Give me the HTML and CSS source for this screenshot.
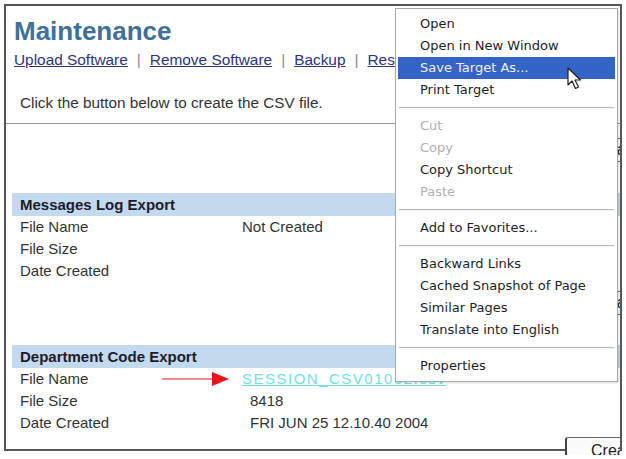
FILE: index.html
```html
<!DOCTYPE html>
<html lang="en">
<head>
  <meta charset="UTF-8" />
  <title>Maintenance</title>
  <link rel="stylesheet" href="styles.css">
</head>
<body>
  <div class="frame">
    <div class="page">
      <h1 class="title">Maintenance</h1>
      <div class="tabs">
        <a href="#">Upload Software</a><span class="pipe">|</span><a href="#">Remove Software</a><span class="pipe">|</span><a href="#">Backup</a><span class="pipe">|</span><a href="#">Restore</a><span class="pipe">|</span><a href="#">Export</a>
      </div>
      <p class="intro">Click the button below to create the CSV file.</p>
      <div class="rule"></div>
      <div class="btn-row first"><button class="btn">Create CSV</button></div>

      <div class="band">Messages Log Export</div>
      <div class="row"><span class="label">File Name</span><span class="value">Not Created</span></div>
      <div class="row"><span class="label">File Size</span><span class="value"></span></div>
      <div class="row"><span class="label">Date Created</span><span class="value"></span></div>
      <div class="btn-row second"><button class="btn">Create CSV</button></div>

      <div class="band dept">Department Code Export</div>
      <div class="row">
        <span class="label">File Name
          <svg class="arrow" width="68" height="14" viewBox="0 0 68 14">
            <line x1="0" y1="7" x2="52" y2="7" stroke="#e21b1b" stroke-width="1.2"/>
            <polygon points="50,0 67,7 50,14" fill="#e8141a"/>
          </svg>
        </span>
        <a class="value file-link" href="#">SESSION_CSV01062.csv</a>
      </div>
      <div class="row"><span class="label">File Size</span><span class="value num">8418</span></div>
      <div class="row"><span class="label">Date Created</span><span class="value num">FRI JUN 25 12.10.40 2004</span></div>
      <div class="btn-row last"><button class="btn">Create CSV</button></div>
    </div>

    <ul class="context-menu">
      <li>Open</li>
      <li>Open in New Window</li>
      <li class="active">Save Target As...</li>
      <li>Print Target</li>
      <li class="sep"></li>
      <li class="off">Cut</li>
      <li class="off">Copy</li>
      <li>Copy Shortcut</li>
      <li class="off">Paste</li>
      <li class="sep"></li>
      <li>Add to Favorites...</li>
      <li class="sep"></li>
      <li>Backward Links</li>
      <li>Cached Snapshot of Page</li>
      <li>Similar Pages</li>
      <li>Translate into English</li>
      <li class="sep"></li>
      <li>Properties</li>
    </ul>

    <svg class="cursor" width="16" height="24" viewBox="0 0 16 24">
      <path d="M1 1 L1 18 L5 14 L8.5 21.5 L11.5 20 L8 13 L13.5 13 Z" fill="#fff" stroke="#222" stroke-width="1.2" stroke-linejoin="round"/>
    </svg>
  </div>
</body>
</html>
```

FILE: styles.css
```css
* {
  box-sizing: border-box;
}
body {
  margin: 0;
  background: #ffffff;
  font-family: "Liberation Sans", Arial, sans-serif;
  color: #333;
}
.frame {
  position: relative;
  margin: 4px;
  width: 618px;
  height: 447px;
  border: 2px solid #565656;
  overflow-x: clip;
  overflow-y: visible;
  background: #fff;
}
.page {
  width: 720px;
  padding: 10px 0 0 6px;
}
.title {
  margin: 0;
  padding-left: 2px;
  font-size: 26px;
  line-height: 30px;
  font-weight: bold;
  color: #40709a;
}
.tabs {
  margin-top: 5px;
  padding-left: 2px;
  font-size: 15.4px;
  line-height: 18px;
  white-space: nowrap;
}
.tabs a {
  color: #2e3384;
  text-decoration: underline;
}
.pipe {
  color: #888;
  margin: 0 9px;
}
.intro {
  margin: 25px 0 0;
  padding-left: 8px;
  font-size: 15.3px;
  line-height: 18px;
  color: #333;
}
.rule {
  margin-top: 11px;
  margin-left: -6px;
  border-top: 1px solid #9a9a9a;
}
.btn-row {
  padding-left: 553px;
  height: 24px;
}
.btn-row.first {
  margin-top: 14px;
}
.btn-row.second {
  margin-top: 9px;
}
.btn-row.last {
  margin-top: 3px;
  height: 28px;
}
.btn {
  height: 100%;
  padding: 0 24px;
  font-family: "Liberation Sans", Arial, sans-serif;
  font-size: 16px;
  color: #222;
  background: #fbfbfb;
  border: 1px solid #666;
  border-left: 2px solid #444;
  border-radius: 3px;
}
.band {
  margin-top: 31px;
  height: 23px;
  padding-left: 8px;
  background: #c3d9ee;
  font-size: 15px;
  line-height: 23px;
  font-weight: bold;
  color: #1c1c2c;
}
.band.dept {
  margin-top: 30px;
}
.row {
  display: flex;
  height: 22px;
  padding-left: 8px;
  font-size: 15px;
  line-height: 22px;
  color: #333;
}
.label {
  display: flex;
  align-items: center;
  width: 222px;
}
.arrow {
  margin-left: auto;
  margin-right: 12px;
}
.value.num {
  padding-left: 8px;
}
.file-link {
  color: #6fe1e6;
  letter-spacing: 1.5px;
  text-decoration: underline;
}
.context-menu {
  position: absolute;
  left: 389px;
  top: 2px;
  width: 223px;
  margin: 0;
  padding: 4px 2px;
  list-style: none;
  background: #fff;
  border: 1px solid #a9a9a9;
  box-shadow: 1px 1px 2px rgba(0, 0, 0, 0.15);
  font-family: "DejaVu Sans", Tahoma, sans-serif;
  font-size: 13px;
  color: #1e1e1e;
}
.context-menu li {
  height: 22px;
  line-height: 22px;
  padding-left: 22px;
  white-space: nowrap;
}
.context-menu li.active {
  background: #3464c8;
  color: #eef2ff;
}
.context-menu li.off {
  color: #b0b0b0;
}
.context-menu li.sep {
  height: 14px;
  padding: 0;
  margin: 0 1px;
  background: linear-gradient(#fff 6px, #b8b8b8 6px, #b8b8b8 7px, #f4f4f4 7px, #f4f4f4 8px, #fff 8px);
}
.cursor {
  position: absolute;
  left: 561px;
  top: 61px;
}
```
